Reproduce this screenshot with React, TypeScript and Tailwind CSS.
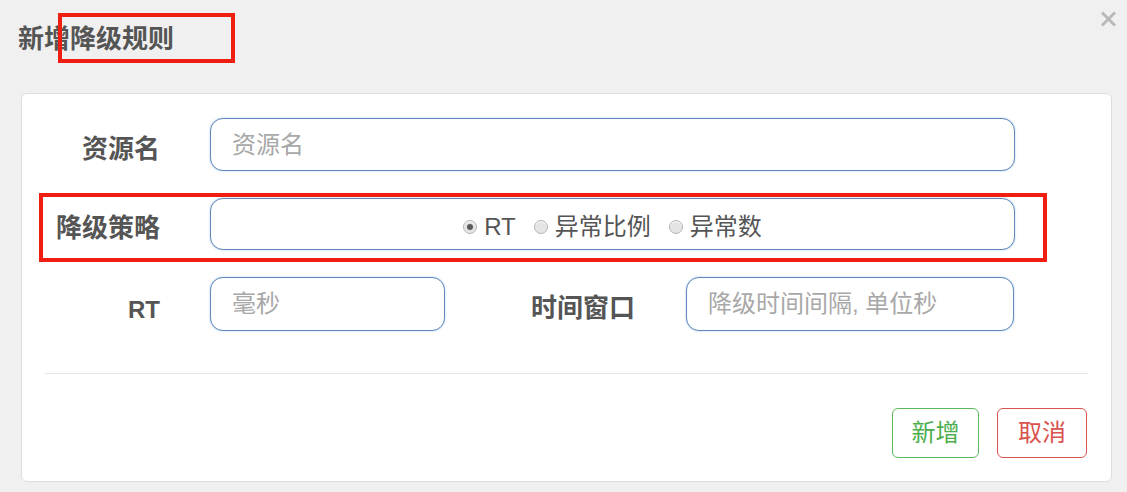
import React from "react";

const font = { fontFamily: '"Liberation Sans", "Noto Sans CJK SC", sans-serif' };

function Radio({ checked, label }: { checked?: boolean; label: string }) {
  return (
    <label className="flex items-center">
      <span className="shrink-0 w-[14px] h-[14px] rounded-full border border-[#b5b5b5] bg-[#e4e4e4] shadow-[inset_0_1px_1px_rgba(255,255,255,0.9)] flex items-center justify-center">
        {checked && <span className="w-[6px] h-[6px] rounded-full bg-[#5a5a5a]" />}
      </span>
      <span className="ml-[7px] text-[24px] text-[#555] leading-none">{label}</span>
    </label>
  );
}

const inputCls =
  "h-[53px] rounded-[13px] border border-[#6389b8] bg-white shadow-[0_0_2px_rgba(120,180,235,0.7)] px-[21px] text-[24px] text-[#555] placeholder:text-[#a8a8a8] outline-none";

export default function App() {
  return (
    <div className="relative w-[1127px] h-[492px] bg-[#f0f0f0] overflow-hidden" style={font}>
      <div className="h-[93px] pl-[18px] pt-[24px]">
        <h4 className="text-[26px] leading-[30px] font-bold text-[#555]">新增降级规则</h4>
      </div>

      <div className="ml-[21px] mr-[15px] h-[389px] bg-white border border-[#dddddd] rounded-[6px] px-[23px] pt-[24px]">
        {/* row 1 */}
        <div className="flex h-[53px]">
          <div className="w-[115px] flex items-center justify-end pt-[9px] text-[26px] font-bold text-[#555]">资源名</div>
          <input className={`${inputCls} ml-[50px] w-[805px]`} placeholder="资源名" />
        </div>
        {/* row 2 */}
        <div className="flex h-[52px] mt-[27px]">
          <div className="w-[115px] flex items-center justify-end pt-[9px] text-[26px] font-bold text-[#555]">降级策略</div>
          <div className="ml-[50px] w-[805px] h-[52px] rounded-[13px] border border-[#6389b8] bg-white shadow-[0_0_2px_rgba(120,180,235,0.7)] flex items-center justify-center gap-[18px] pt-[5px]">
            <Radio checked label="RT" />
            <Radio label="异常比例" />
            <Radio label="异常数" />
          </div>
        </div>
        {/* row 3 */}
        <div className="flex h-[54px] mt-[27px]">
          <div className="w-[115px] flex items-center justify-end pt-[12px] text-[24px] font-bold text-[#555]">RT</div>
          <input className={`${inputCls} h-[54px] ml-[50px] w-[235px]`} placeholder="毫秒" />
          <div className="w-[190px] flex items-center justify-end pt-[8px] text-[26px] font-bold text-[#555]">时间窗口</div>
          <input className={`${inputCls} h-[54px] ml-[51px] w-[328px]`} placeholder="降级时间间隔, 单位秒" />
        </div>

        <div className="mt-[42px] h-px bg-[#e5e5e5]" />

        <div className="mt-[34px] flex justify-end gap-[18px] pr-[1px]">
          <button className="w-[87px] h-[50px] rounded-[6px] border border-[#5cb85c] bg-white text-[24px] text-[#4cae4c]">新增</button>
          <button className="w-[90px] h-[50px] rounded-[6px] border border-[#d9534f] bg-white text-[24px] text-[#d9534f]">取消</button>
        </div>
      </div>

      {/* close */}
      <svg className="absolute left-[1100px] top-[11px]" width="17" height="16" viewBox="0 0 17 16">
        <path d="M2 1.5 L15 14.5 M15 1.5 L2 14.5" stroke="#b9b9b9" strokeWidth="3" strokeLinecap="butt" />
      </svg>

      {/* annotation boxes */}
      <div className="absolute left-[58px] top-[13px] w-[177px] h-[50px] border-[4px] border-[#ef1e10]" />
      <div className="absolute left-[39px] top-[193px] w-[1008px] h-[69px] border-[4px] border-[#ef1e10]" />
    </div>
  );
}
